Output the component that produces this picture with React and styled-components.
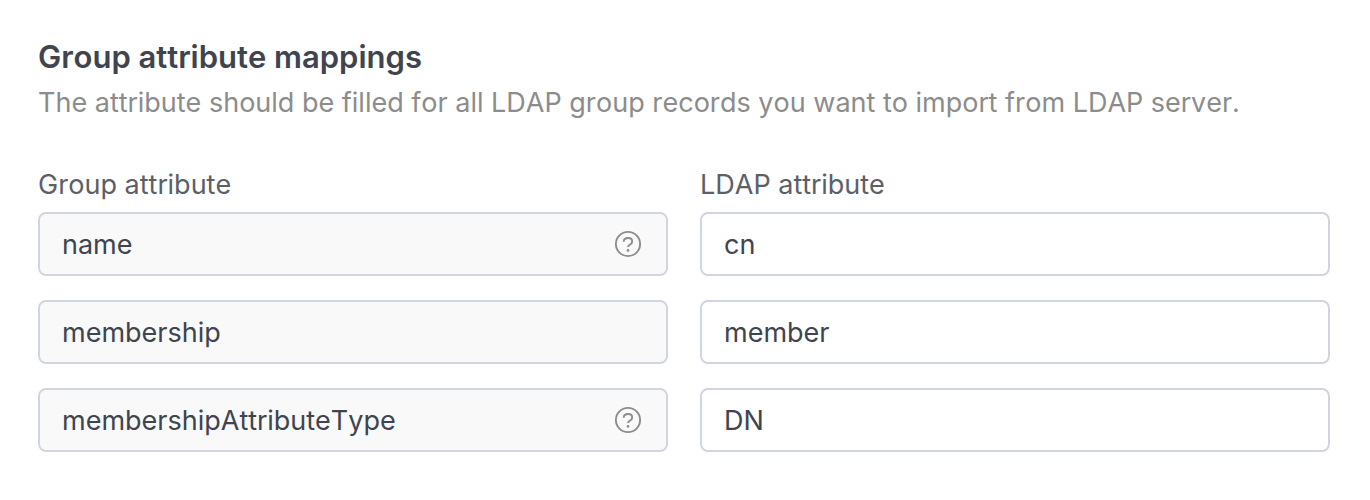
import React from "react";
import styled, { createGlobalStyle } from "styled-components";

const GlobalStyle = createGlobalStyle`
  *, *::before, *::after { box-sizing: border-box; }
  body {
    margin: 0;
    background: #ffffff;
    color: #40444f;
    font-family: Inter, "Liberation Sans", sans-serif;
    font-kerning: none;
    -webkit-font-smoothing: antialiased;
  }
`;

const Section = styled.section`
  padding: 36px 40px 48px 38px;
`;

const Title = styled.h2`
  margin: 0;
  font-size: 31px;
  line-height: 42px;
  font-weight: 600;
`;

const Description = styled.p`
  margin: 0 0 36px;
  color: #8c8c8c;
  font-size: 27px;
  line-height: 50px;
`;

const Mappings = styled.form`
  display: grid;
  grid-template-columns: 1fr 1fr;
  column-gap: 32px;
`;

const Column = styled.div`
  min-width: 0;
`;

const ColumnLabel = styled.label`
  display: block;
  margin-bottom: 6px;
  color: #5b6068;
  font-size: 27px;
  line-height: 42px;
`;

const Fields = styled.div`
  display: flex;
  flex-direction: column;
  gap: 24px;
`;

const Field = styled.div`
  display: flex;
  align-items: center;
  height: 64px;
  padding: 0 24px 0 22px;
  border: 2px solid #d0d5e1;
  border-radius: 8px;
  background: ${({ $locked }) => ($locked ? "#f9f9f9" : "#ffffff")};
`;

const TextInput = styled.input`
  flex: 1;
  min-width: 0;
  height: 100%;
  padding: 0;
  border: 0;
  outline: 0;
  background: transparent;
  color: #40444f;
  font: inherit;
  font-size: 27px;
  font-kerning: none;
`;

const HelpButton = styled.button`
  display: flex;
  padding: 0;
  border: 0;
  background: transparent;
  color: #8c8c8c;
  cursor: pointer;
`;

function HelpIcon() {
  return (
    <svg width="28" height="28" viewBox="0 0 28 28" fill="none" stroke="currentColor" strokeWidth="1.9" aria-hidden="true">
      <circle cx="14" cy="14" r="12.1" />
      <path d="M9.700 11.700C9.800 9.400 11.500 8 14 8s4.200 1.400 4.200 3.400c0 1.500-.8 2.300-2.100 3.100-1.500.9-2.100 1.400-2.100 2.500" />
      <circle cx="14" cy="20.400" r="1.300" fill="currentColor" stroke="none" />
    </svg>
  );
}

const rows = [
  { group: "name", ldap: "cn", help: true },
  { group: "membership", ldap: "member", help: false },
  { group: "membershipAttributeType", ldap: "DN", help: true },
];

export default function App() {
  return (
    <>
      <GlobalStyle />
      <Section>
        <Title>Group attribute mappings</Title>
        <Description>
          The attribute should be filled for all LDAP group records you want to import from LDAP server.
        </Description>
        <Mappings>
          <Column>
            <ColumnLabel htmlFor="group-0">Group attribute</ColumnLabel>
            <Fields>
              {rows.map((row, i) => (
                <Field key={row.group} $locked>
                  <TextInput id={`group-${i}`} aria-label={`Group attribute ${i + 1}`} defaultValue={row.group} readOnly />
                  {row.help && (
                    <HelpButton type="button" aria-label={`About ${row.group}`}>
                      <HelpIcon />
                    </HelpButton>
                  )}
                </Field>
              ))}
            </Fields>
          </Column>
          <Column>
            <ColumnLabel htmlFor="ldap-0">LDAP attribute</ColumnLabel>
            <Fields>
              {rows.map((row, i) => (
                <Field key={row.group}>
                  <TextInput id={`ldap-${i}`} aria-label={`LDAP attribute for ${row.group}`} defaultValue={row.ldap} />
                </Field>
              ))}
            </Fields>
          </Column>
        </Mappings>
      </Section>
    </>
  );
}
